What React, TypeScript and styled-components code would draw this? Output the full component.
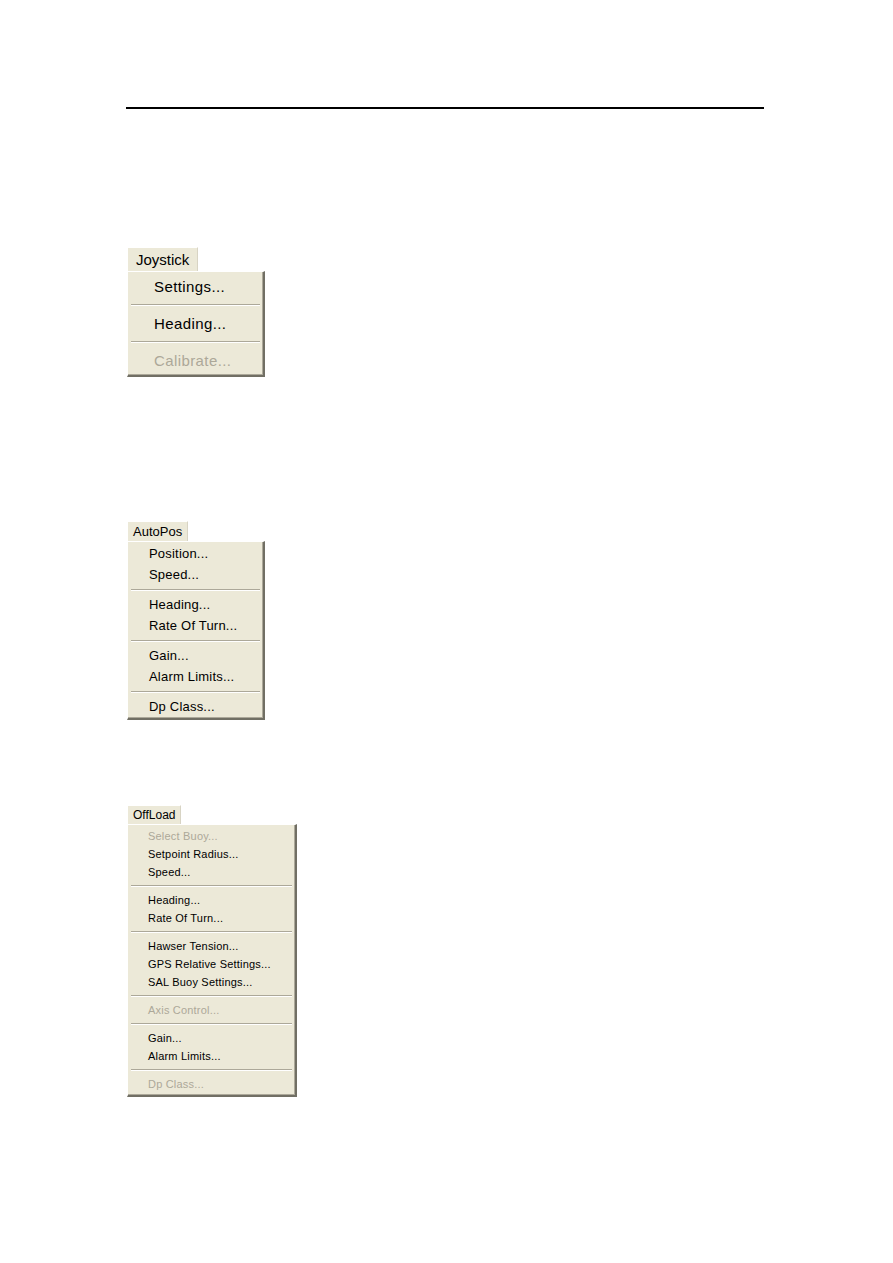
import styled, { createGlobalStyle } from "styled-components";

const GlobalStyle = createGlobalStyle`
  body {
    margin: 0;
    background: #ffffff;
    font-family: "Liberation Sans", Arial, sans-serif;
  }
`;

const Page = styled.div`
  display: flex;
  flex-direction: column;
  align-items: flex-start;
  padding: 107px 0 0 126px;
  min-height: 1263px;
  box-sizing: border-box;
`;

const Rule = styled.hr`
  width: 638px;
  height: 2px;
  margin: 0;
  border: none;
  background: #000000;
`;

const MenuBlock = styled.div<{ $top: number }>`
  display: flex;
  flex-direction: column;
  align-items: flex-start;
  margin: ${(p) => p.$top}px 0 0 1px;
`;

const Tab = styled.div<{ $size: number; $height: number; $pad: number }>`
  height: ${(p) => p.$height}px;
  padding: 0 ${(p) => p.$pad}px;
  display: flex;
  align-items: center;
  box-sizing: border-box;
  background: #ece9d8;
  border: 1px solid #ffffff;
  border-right-color: #d8d4c4;
  border-bottom: none;
  font-size: ${(p) => p.$size}px;
  color: #000000;
`;

const Panel = styled.div<{ $width: number; $padY: number }>`
  width: ${(p) => p.$width}px;
  box-sizing: border-box;
  display: flex;
  flex-direction: column;
  padding: ${(p) => p.$padY}px 0;
  background: #ece9d8;
  border: 1px solid;
  border-color: #ffffff #716f64 #716f64 #ffffff;
  border-right-width: 2px;
  border-bottom-width: 2px;
  box-shadow: inset -1px -1px 0 #aca899;
`;

const Item = styled.div<{
  $size: number;
  $height: number;
  $indent: number;
  $disabled?: boolean;
}>`
  height: ${(p) => p.$height}px;
  padding-left: ${(p) => p.$indent}px;
  display: flex;
  align-items: center;
  font-size: ${(p) => p.$size}px;
  letter-spacing: ${(p) => (p.$size > 13 ? 0.4 : 0.2)}px;
  color: ${(p) => (p.$disabled ? "#aca899" : "#000000")};
  white-space: nowrap;
`;

const Separator = styled.div<{ $height: number }>`
  height: ${(p) => p.$height}px;
  display: flex;
  align-items: center;
  padding: 0 3px 0 3px;

  &::after {
    content: "";
    flex: 1;
    height: 1px;
    background: #aca899;
    border-bottom: 1px solid #ffffff;
  }
`;

type Entry = { label: string; disabled?: boolean } | "sep";

interface MenuProps {
  title: string;
  top: number;
  width: number;
  tabSize: number;
  tabHeight: number;
  tabPad: number;
  size: number;
  itemHeight: number;
  sepHeight: number;
  indent: number;
  padY: number;
  entries: Entry[];
}

const Menu = ({
  title,
  top,
  width,
  tabSize,
  tabHeight,
  tabPad,
  size,
  itemHeight,
  sepHeight,
  indent,
  padY,
  entries,
}: MenuProps) => (
  <MenuBlock $top={top}>
    <Tab $size={tabSize} $height={tabHeight} $pad={tabPad}>
      {title}
    </Tab>
    <Panel $width={width} $padY={padY}>
      {entries.map((e, i) =>
        e === "sep" ? (
          <Separator key={i} $height={sepHeight} />
        ) : (
          <Item
            key={i}
            $size={size}
            $height={itemHeight}
            $indent={indent}
            $disabled={e.disabled}
          >
            {e.label}
          </Item>
        )
      )}
    </Panel>
  </MenuBlock>
);

const joystick: Entry[] = [
  { label: "Settings..." },
  "sep",
  { label: "Heading..." },
  "sep",
  { label: "Calibrate...", disabled: true },
];

const autoPos: Entry[] = [
  { label: "Position..." },
  { label: "Speed..." },
  "sep",
  { label: "Heading..." },
  { label: "Rate Of Turn..." },
  "sep",
  { label: "Gain..." },
  { label: "Alarm Limits..." },
  "sep",
  { label: "Dp Class..." },
];

const offLoad: Entry[] = [
  { label: "Select Buoy...", disabled: true },
  { label: "Setpoint Radius..." },
  { label: "Speed..." },
  "sep",
  { label: "Heading..." },
  { label: "Rate Of Turn..." },
  "sep",
  { label: "Hawser Tension..." },
  { label: "GPS Relative Settings..." },
  { label: "SAL Buoy Settings..." },
  "sep",
  { label: "Axis Control...", disabled: true },
  "sep",
  { label: "Gain..." },
  { label: "Alarm Limits..." },
  "sep",
  { label: "Dp Class...", disabled: true },
];

const App = () => (
  <>
    <GlobalStyle />
    <Page>
      <Rule />
      <Menu
        title="Joystick"
        top={138}
        width={138}
        tabSize={15}
        tabHeight={24}
        tabPad={8}
        size={15}
        itemHeight={29}
        sepHeight={8}
        indent={26}
        padY={0}
        entries={joystick}
      />
      <Menu
        title="AutoPos"
        top={144}
        width={138}
        tabSize={13}
        tabHeight={20}
        tabPad={5}
        size={13}
        itemHeight={21}
        sepHeight={9}
        indent={21}
        padY={1}
        entries={autoPos}
      />
      <Menu
        title="OffLoad"
        top={85}
        width={170}
        tabSize={12}
        tabHeight={19}
        tabPad={5}
        size={11}
        itemHeight={18}
        sepHeight={10}
        indent={20}
        padY={2}
        entries={offLoad}
      />
    </Page>
  </>
);

export default App;
